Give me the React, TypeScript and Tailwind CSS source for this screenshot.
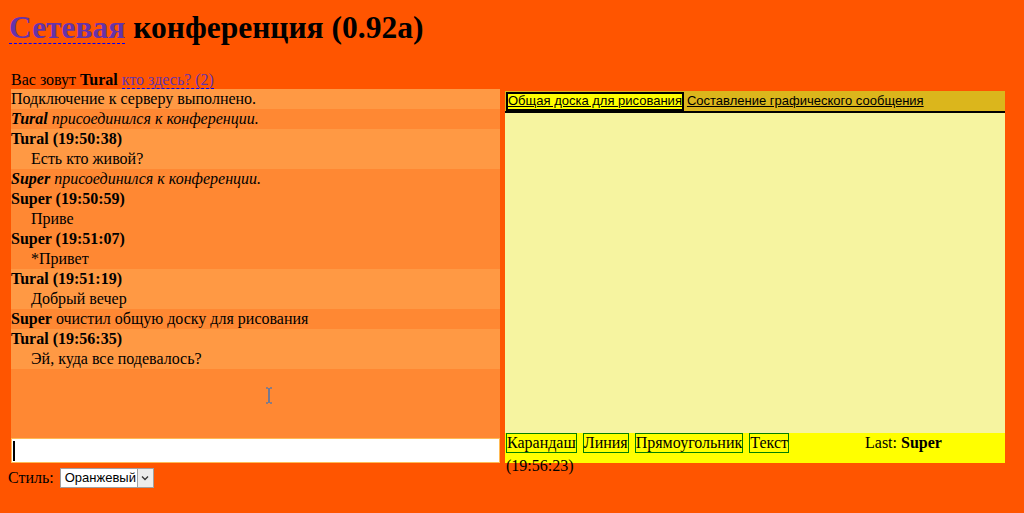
import React from 'react';

type Row = { kind: 'plain' | 'join' | 'msg' | 'clear'; who?: string; time?: string; text?: string; light: boolean };

const ROWS: Row[] = [
  { kind: 'plain', text: 'Подключение к серверу выполнено.', light: true },
  { kind: 'join', who: 'Tural', light: false },
  { kind: 'msg', who: 'Tural', time: '19:50:38', text: 'Есть кто живой?', light: true },
  { kind: 'join', who: 'Super', light: false },
  { kind: 'msg', who: 'Super', time: '19:50:59', text: 'Приве', light: false },
  { kind: 'msg', who: 'Super', time: '19:51:07', text: '*Привет', light: false },
  { kind: 'msg', who: 'Tural', time: '19:51:19', text: 'Добрый вечер', light: true },
  { kind: 'clear', who: 'Super', light: false },
  { kind: 'msg', who: 'Tural', time: '19:56:35', text: 'Эй, куда все подевалось?', light: true },
];

function ChatRow({ row }: { row: Row }) {
  const bg = row.light ? 'bg-[#ff9944]' : 'bg-[#ff8833]';
  if (row.kind === 'plain') return <div className={`${bg} h-5 leading-5`}>{row.text}</div>;
  if (row.kind === 'join')
    return (
      <div className={`${bg} h-5 leading-5 italic`}>
        <b>{row.who}</b> присоединился к конференции.
      </div>
    );
  if (row.kind === 'clear')
    return (
      <div className={`${bg} h-5 leading-5`}>
        <b>{row.who}</b> очистил общую доску для рисования
      </div>
    );
  return (
    <div className={bg}>
      <div className="h-5 leading-5 font-bold">
        {row.who} ({row.time})
      </div>
      <div className="h-5 leading-5 pl-5">{row.text}</div>
    </div>
  );
}

const TOOLS = ['Карандаш', 'Линия', 'Прямоугольник', 'Текст'];

export default function App() {
  return (
    <div className="w-[1024px] h-[513px] bg-[#ff5500] text-black font-['Liberation_Serif',serif] text-[16px] overflow-hidden">
      <h1 className="pt-[9px] pl-[9px] text-[31.5px] leading-[37px] font-bold">
        <span className="text-[#6633aa] border-b border-dashed border-[#0000ff] leading-[30px] inline-block">Сетевая</span>{' '}
        конференция (0.92a)
      </h1>

      <div className="mt-[25px] pl-[11px] leading-[18px]">
        Вас зовут <b>Tural</b>{' '}
        <span className="text-[#6633aa] border-b border-dashed border-[#0000ff]">кто здесь? (2)</span>
      </div>

      <div className="flex pl-[11px] gap-[5px]">
        <div className="w-[489px] h-[374px] flex flex-col">
          <div className="relative flex-1 bg-[#ff8833]">
            {ROWS.map((r, i) => (
              <ChatRow key={i} row={r} />
            ))}
            <svg className="absolute left-[254px] top-[298px]" width="8" height="17" viewBox="0 0 8 17">
              <path d="M1 1h2M5 1h2M4 1v15M1 16h2M5 16h2" stroke="#1a6fd0" strokeWidth="1.2" fill="none" />
            </svg>
          </div>
          <div className="h-[25px] bg-white border border-[#ffbb55] flex items-center pl-[1px]">
            <div className="w-[2px] h-[20px] bg-black" />
          </div>
        </div>

        <div className="mt-[2px] w-[500px] h-[372px] flex flex-col">
          <div className="h-[20px] bg-[#dbb61c] flex items-center pl-[1px] gap-[3px] font-['Liberation_Sans',Arial,sans-serif] text-[13px]">
            <span className="bg-[#ffff00] border-2 border-black h-[19px] leading-[14px] underline">
              Общая доска для рисования
            </span>
            <span className="underline leading-[14px]">Составление графического сообщения</span>
          </div>
          <div className="h-[2px] bg-black" />
          <div className="flex-1 bg-[#f6f4a0]" />
          <div className="h-[30px] bg-[#ffff00]">
            <div className="flex items-start pl-[1px] h-[20px]">
              {TOOLS.map((t, i) => (
                <span
                  key={t}
                  className={`border border-[#008000] h-[20px] leading-[18px] ${i > 0 ? 'ml-[6px]' : ''}`}
                >
                  {t}
                </span>
              ))}
              <span className="ml-[76px] leading-[20px]">
                Last: <b>Super</b>
              </span>
            </div>
            <div className="pl-[1px] leading-[20px] mt-[3px]">(19:56:23)</div>
          </div>
        </div>
      </div>

      <div className="flex items-center pl-[8px] mt-[5px] h-[20px]">
        <span>Стиль:</span>
        <div className="ml-[6px] flex h-[20px] border border-[#a0a0a0] bg-white font-['Liberation_Sans',Arial,sans-serif] text-[13px]">
          <span className="px-[4px] leading-[18px] w-[76px]">Оранжевый</span>
          <span className="w-[16px] bg-[#ececec] border-l border-[#a0a0a0] flex items-center justify-center">
            <svg width="8" height="6" viewBox="0 0 8 6">
              <path d="M1 1.5l3 3 3-3" stroke="#333" strokeWidth="1.3" fill="none" />
            </svg>
          </span>
        </div>
      </div>
    </div>
  );
}
